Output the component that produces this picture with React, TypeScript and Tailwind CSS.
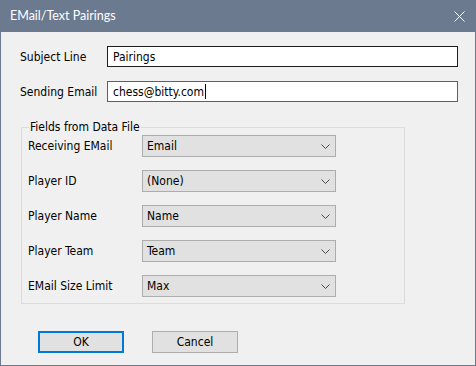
import React from 'react';

const Chevron = () => (
  <svg width="9" height="5" viewBox="0 0 9 5" className="shrink-0">
    <polyline points="0.5,0.5 4.5,4.5 8.5,0.5" fill="none" stroke="#4a4a4a" strokeWidth="1" />
  </svg>
);

const Combo = ({ value }: { value: string }) => (
  <div className="flex h-[22px] w-[194px] items-center justify-between border border-[#adadad] bg-[#e1e1e1] pl-[4px] pr-[5px]">
    <span>{value}</span>
    <Chevron />
  </div>
);

const fields = [
  { label: 'Receiving EMail', value: 'Email' },
  { label: 'Player ID', value: '(None)' },
  { label: 'Player Name', value: 'Name' },
  { label: 'Player Team', value: 'Team' },
  { label: 'EMail Size Limit', value: 'Max' },
];

export default function App() {
  return (
    <div
      className="flex h-[366px] w-[476px] flex-col border-x border-b border-[#6b7a8f] bg-[#f0f0f0] text-[12px] text-black"
      style={{ fontFamily: '"DejaVu Sans Condensed", "Liberation Sans", Arial, sans-serif' }}
    >
      {/* title bar */}
      <div className="-mx-px flex h-[32px] shrink-0 items-center justify-between bg-[#6b7a8f] pl-[10px] pr-[11px] text-white">
        <span className="text-[12.5px]" style={{ fontFamily: 'Lato, "Noto Sans", sans-serif' }}>
          EMail/Text Pairings
        </span>
        <svg width="11" height="11" viewBox="0 0 11 11">
          <path d="M0.5 0.5 L10.5 10.5 M10.5 0.5 L0.5 10.5" stroke="#ffffff" strokeWidth="1" />
        </svg>
      </div>

      <div className="flex flex-col pl-[19px]">
        <div className="mt-[14px] flex items-center">
          <span className="w-[87px]">Subject Line</span>
          <div className="flex h-[21px] w-[351px] items-center border border-[#1e1e1e] bg-white pl-[5px]">Pairings</div>
        </div>
        <div className="mt-[14px] flex items-center">
          <span className="w-[87px]">Sending Email</span>
          <div className="flex h-[21px] w-[351px] items-center border border-[#0078d7] bg-white pl-[5px]">
            chess@bitty.com
            <span className="ml-px h-[15px] w-px bg-black" />
          </div>
        </div>

        <fieldset className="mt-[19px] ml-px w-[384px] border border-[#dcdcdc] pb-[6px] pl-[6px]">
          <legend className="ml-[1px] px-[1px] leading-[12px]">Fields from Data File</legend>
          <div className="mt-[2px] flex flex-col gap-[13px]">
            {fields.map((f) => (
              <div key={f.label} className="flex items-center">
                <span className="w-[114px]">{f.label}</span>
                <Combo value={f.value} />
              </div>
            ))}
          </div>
        </fieldset>

        <div className="mt-[27px] flex gap-[28px] pl-[18px]">
          <div className="flex h-[22px] w-[86px] items-center justify-center border-2 border-[#0078d7] bg-[#e1e1e1]">OK</div>
          <div className="flex h-[22px] w-[86px] items-center justify-center border border-[#adadad] bg-[#e1e1e1]">Cancel</div>
        </div>
      </div>
    </div>
  );
}
